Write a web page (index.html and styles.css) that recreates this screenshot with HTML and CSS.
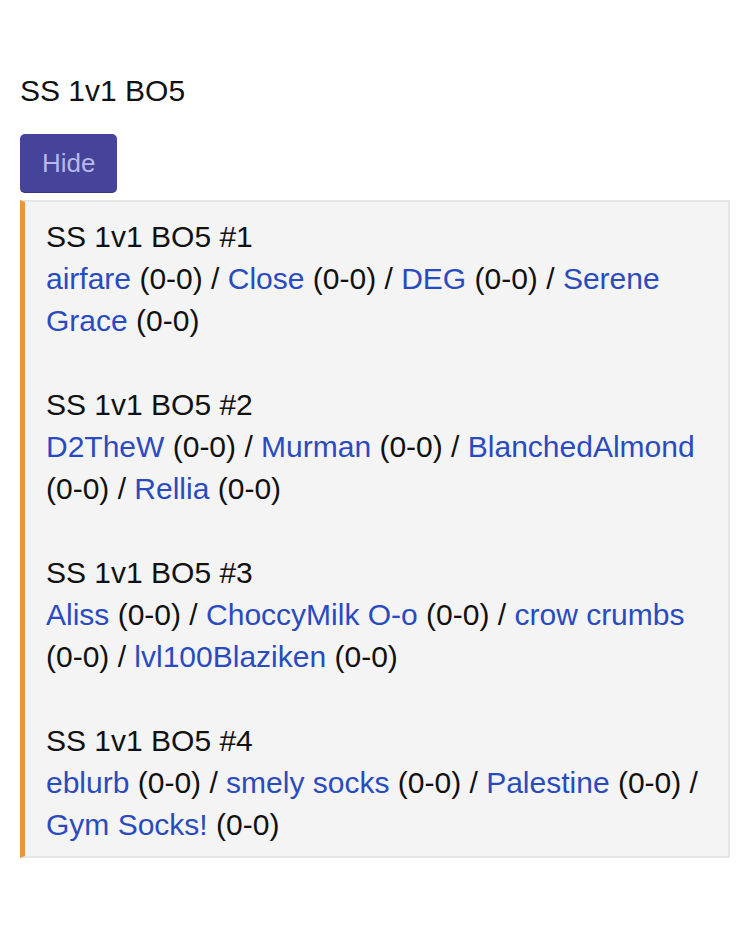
FILE: index.html
```html
<!DOCTYPE html>
<html lang="en">
<head>
    <meta charset="UTF-8">
    <title>SS 1v1 BO5</title>
    <link rel="stylesheet" href="styles.css">
</head>
<body>
    <div class="title">SS 1v1 BO5</div>
    <button class="toggle">Hide</button>
    <div class="pools">
        <p class="pool">SS 1v1 BO5 #1<br>
            <a href="#">airfare</a> <span class="record">(0-0)</span> / <a href="#">Close</a> <span class="record">(0-0)</span> / <a href="#">DEG</a> <span class="record">(0-0)</span> / <a href="#">Serene Grace</a> <span class="record">(0-0)</span>
        </p>
        <p class="pool">SS 1v1 BO5 #2<br>
            <a href="#">D2TheW</a> <span class="record">(0-0)</span> / <a href="#">Murman</a> <span class="record">(0-0)</span> / <a href="#">BlanchedAlmond</a> <span class="record">(0-0)</span> / <a href="#">Rellia</a> <span class="record">(0-0)</span>
        </p>
        <p class="pool">SS 1v1 BO5 #3<br>
            <a href="#">Aliss</a> <span class="record">(0-0)</span> / <a href="#" class="record">ChoccyMilk O-o</a> <span class="record">(0-0)</span> / <a href="#">crow crumbs</a> <span class="record">(0-0)</span> / <a href="#">lvl100Blaziken</a> <span class="record">(0-0)</span>
        </p>
        <p class="pool">SS 1v1 BO5 #4<br>
            <a href="#">eblurb</a> <span class="record">(0-0)</span> / <a href="#">smely socks</a> <span class="record">(0-0)</span> / <a href="#">Palestine</a> <span class="record">(0-0)</span> / <a href="#">Gym Socks!</a> <span class="record">(0-0)</span>
        </p>
    </div>
</body>
</html>
```

FILE: styles.css
```css
body {
    margin: 0;
    padding: 70px 20px 20px;
    font-family: "Liberation Sans", Arial, sans-serif;
    font-size: 30px;
    line-height: 42px;
    color: #111;
    background-color: #fff;
}

.title {
    margin-bottom: 22px;
}

.toggle {
    display: block;
    font-family: inherit;
    font-size: 26px;
    line-height: 29px;
    padding: 15px 22px 14px;
    color: #b8b8ea;
    background-color: #45439a;
    border: none;
    border-bottom: 1px solid #36357f;
    border-radius: 5px;
}

.pools {
    margin-top: 7px;
    padding: 14px 20px 10px 21px;
    background-color: #f4f4f4;
    border: 2px solid #e6e6e6;
    border-left: 5px solid #e8983a;
}

.pool {
    margin: 0 0 42px;
}
.pool:last-child {
    margin-bottom: 0;
}

.pool a {
    color: #2a4bbf;
    text-decoration: none;
}

.record {
    white-space: nowrap;
}
```
